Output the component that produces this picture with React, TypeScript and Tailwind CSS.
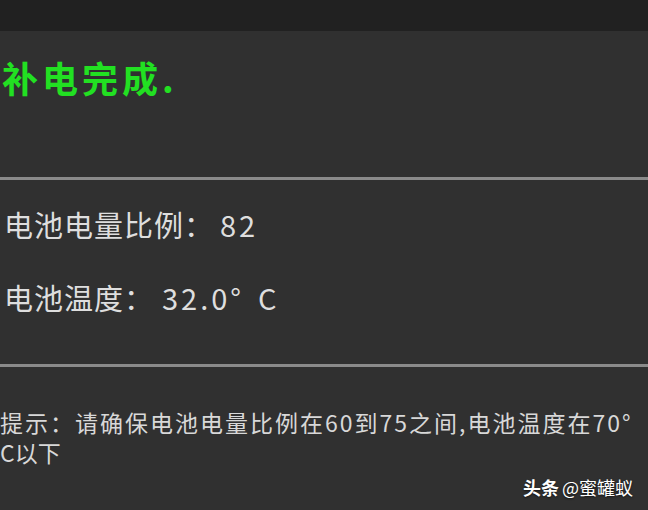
const cjk = { fontFamily: '"Noto Sans CJK SC", "Noto Sans", sans-serif' }

export default function App() {
  return (
    <div className="relative flex h-[510px] w-[648px] flex-col overflow-hidden bg-[#303030]" style={cjk}>
      <div className="h-[31px] shrink-0 bg-[#212121]" />

      <section className="h-[146px] shrink-0 pt-[27px] pl-[2px]">
        <h1 className="whitespace-nowrap text-[36px] leading-[38px] font-bold tracking-[4px] text-[#22e022]">
          补电完成.
        </h1>
      </section>

      <div className="h-[3px] shrink-0 bg-[#8a8a8a]" />

      <section className="flex h-[184px] shrink-0 flex-col gap-[43px] pt-[29px] pl-[4px] text-[#dedede]">
        <p className="whitespace-nowrap text-[29px] leading-[30px] tracking-[1px]">
          电池电量比例：<span className="ml-[6px] tracking-[3px]">82</span>
        </p>
        <p className="whitespace-nowrap text-[29px] leading-[30px] tracking-[1px]">
          电池温度：<span className="ml-[8px] tracking-[3px]">32.0°</span>
          <span className="ml-[14px]">C</span>
        </p>
      </section>

      <div className="h-[3px] shrink-0 bg-[#8a8a8a]" />

      <section className="pt-[40px] text-[23px] leading-[30px] text-[#d8d8d8]">
        <p className="whitespace-nowrap tracking-[2px]">提示：请确保电池电量比例在60到75之间,电池温度在70°</p>
        <p className="whitespace-nowrap">C以下</p>
      </section>

      <div className="absolute right-[15px] bottom-[12px] flex items-center gap-[3px] text-[18px] leading-[22px] text-white [text-shadow:0_1px_2px_rgba(0,0,0,0.6)]">
        <span className="font-bold">头条</span>
        <span>@蜜罐蚁</span>
      </div>
    </div>
  )
}
